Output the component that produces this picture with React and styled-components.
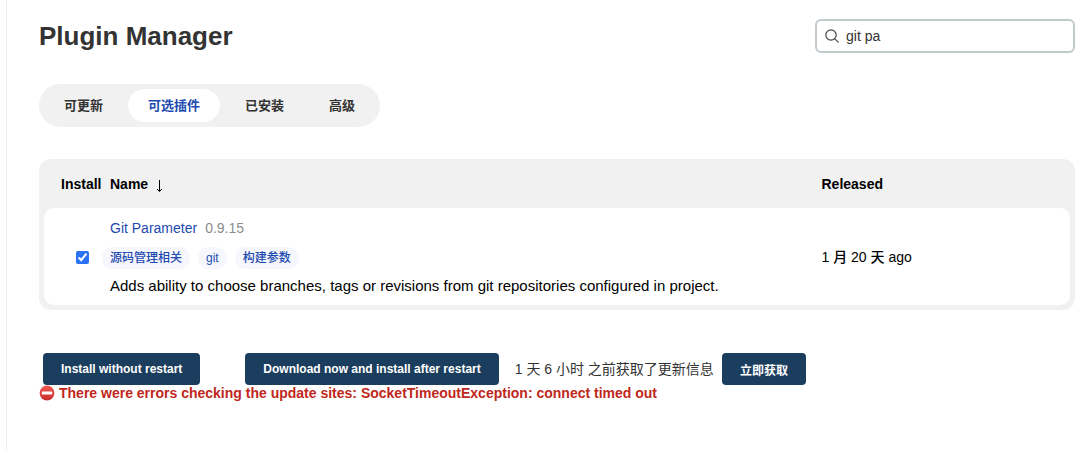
import React, { useState } from "react";
import styled, { createGlobalStyle } from "styled-components";

const GlobalStyle = createGlobalStyle`
  *, *::before, *::after { box-sizing: border-box; }
  body {
    margin: 0;
    background: #fff;
    color: #333;
    font-family: "Liberation Sans", "Noto Sans CJK SC", sans-serif;
    font-size: 14px;
    line-height: 20px;
  }
  button, input { font-family: inherit; }
`;

const Main = styled.main`
  min-height: 100vh;
  margin-left: 6px;
  padding: 19px 10px 48px 32px;
  border-left: 1px solid #f0f0f0;
`;

const Header = styled.header`
  display: flex;
  align-items: center;
  justify-content: space-between;
  gap: 20px;
`;

const Title = styled.h1`
  margin: 0;
  font-size: 26px;
  line-height: 34px;
  font-weight: 700;
`;

const SearchBox = styled.label`
  display: flex;
  align-items: center;
  gap: 7px;
  width: 260px;
  height: 34px;
  padding: 0 8px;
  border: 2px solid #c3cace;
  border-radius: 6px;
  background: #fff;
`;

const SearchInput = styled.input`
  flex: 1;
  min-width: 0;
  padding: 0;
  border: 0;
  outline: 0;
  background: transparent;
  color: #333;
  font-size: 14px;
  line-height: 20px;
`;

const Tabs = styled.nav`
  display: flex;
  width: fit-content;
  gap: 5px;
  margin-top: 31px;
  padding: 5px;
  border-radius: 22px;
  background: #f1f1f1;
`;

const Tab = styled.a`
  padding: 0 20px;
  border-radius: 17px;
  background: ${(p) => (p.$active ? "#fff" : "transparent")};
  color: ${(p) => (p.$active ? "#1d4ab0" : "#333")};
  font-size: 13px;
  line-height: 33px;
  font-weight: 700;
  text-decoration: none;
`;

const TableFrame = styled.div`
  margin-top: 32px;
  padding: 0 5px 5px;
  border-radius: 12px;
  background: #f1f1f1;
`;

const PluginTable = styled.table`
  width: 100%;
  border-collapse: separate;
  border-spacing: 0;
  table-layout: fixed;
  color: #000;
`;

const HeadCell = styled.th`
  width: ${(p) => p.$width || "auto"};
  height: 49px;
  padding: 0 0 0 ${(p) => (p.$first ? 17 : 8)}px;
  font-size: 14px;
  text-align: left;
  white-space: nowrap;
`;

const SortArrow = styled.svg`
  margin-left: 8px;
  vertical-align: -4px;
`;

const Cell = styled.td`
  padding: 10px 8px 9px;
  background: #fff;
  font-weight: 500;
  vertical-align: middle;
  &:first-child {
    padding-right: 0;
    padding-left: 32px;
    border-radius: 10px 0 0 10px;
  }
  &:last-child { border-radius: 0 10px 10px 0; }
`;

const Checkbox = styled.input`
  display: block;
  width: 13px;
  height: 13px;
  margin: 0;
  accent-color: #2a72f5;
`;

const PluginLink = styled.a`
  color: #1d4ab0;
  text-decoration: none;
`;

const Version = styled.span`
  margin-left: 8px;
  color: #8c8c8c;
`;

const TagList = styled.div`
  display: flex;
  gap: 8px;
  margin: 9px 0 7px -8px;
`;

const Tag = styled.a`
  padding: 0 8px;
  border-radius: 11px;
  background: #f6f7fc;
  color: #1d4ab0;
  font-size: 12px;
  line-height: 22px;
  text-decoration: none;
`;

const Description = styled.div`
  font-size: 15px;
`;

const Actions = styled.div`
  display: flex;
  align-items: center;
  margin-top: 43px;
  padding-left: 4px;
`;

const Button = styled.button`
  height: 32px;
  padding: 0 18px;
  border: 0;
  border-radius: 4px;
  background: #1b3e5e;
  color: #fff;
  font-size: 12px;
  font-weight: 700;
  white-space: nowrap;
  & + & { margin-left: 45px; }
`;

const UpdateInfo = styled.span`
  margin: 0 8px 0 16px;
`;

const ErrorMessage = styled.div`
  display: flex;
  align-items: center;
  gap: 4px;
  line-height: 16px;
  font-weight: 700;
  color: #c02720;
`;

const SearchIcon = () => (
  <svg width="14" height="14" viewBox="0 0 14 14" fill="none" stroke="#444" strokeWidth="1.2" strokeLinecap="round" aria-hidden="true">
    <circle cx="6" cy="6" r="5.2" />
    <path d="M9.8 9.8 13.2 13.2" />
  </svg>
);

const NoEntryIcon = () => (
  <svg width="16" height="16" viewBox="0 0 16 16" aria-hidden="true">
    <defs>
      <linearGradient id="sign" x1="0" y1="0" x2="0" y2="1">
        <stop offset="0" stopColor="#f0584f" />
        <stop offset="1" stopColor="#c9302c" />
      </linearGradient>
    </defs>
    <circle cx="8" cy="8" r="7.4" fill="url(#sign)" />
    <rect x="2.8" y="6.4" width="10.4" height="3.2" rx="0.6" fill="#fff" />
  </svg>
);

const tabs = ["可更新", "可选插件", "已安装", "高级"];
const tags = ["源码管理相关", "git", "构建参数"];

export default function App() {
  const [query, setQuery] = useState("git pa");
  const [checked, setChecked] = useState(true);
  const [active, setActive] = useState(1);

  return (
    <>
      <GlobalStyle />
      <Main>
        <Header>
          <Title>Plugin Manager</Title>
          <SearchBox>
            <SearchIcon />
            <SearchInput aria-label="Search" value={query} onChange={(e) => setQuery(e.target.value)} />
          </SearchBox>
        </Header>
        <Tabs>
          {tabs.map((name, i) => (
            <Tab key={name} href="#" $active={i === active} onClick={() => setActive(i)}>{name}</Tab>
          ))}
        </Tabs>
        <TableFrame>
          <PluginTable>
            <thead>
              <tr>
                <HeadCell $first $width="58px">Install</HeadCell>
                <HeadCell>
                  Name
                  <SortArrow width="7" height="14" viewBox="0 0 7 14" fill="none" stroke="#000" aria-hidden="true">
                    <path d="M3.5 1v11" />
                    <path d="M1.2 10 3.5 12.6 5.8 10" />
                  </SortArrow>
                </HeadCell>
                <HeadCell $width="25%">Released</HeadCell>
              </tr>
            </thead>
            <tbody>
              <tr>
                <Cell>
                  <Checkbox type="checkbox" aria-label="Git Parameter" checked={checked} onChange={(e) => setChecked(e.target.checked)} />
                </Cell>
                <Cell>
                  <div>
                    <PluginLink href="#">Git Parameter</PluginLink>
                    <Version>0.9.15</Version>
                  </div>
                  <TagList>
                    {tags.map((tag) => <Tag key={tag} href="#">{tag}</Tag>)}
                  </TagList>
                  <Description>Adds ability to choose branches, tags or revisions from git repositories configured in project.</Description>
                </Cell>
                <Cell>1 月 20 天 ago</Cell>
              </tr>
            </tbody>
          </PluginTable>
        </TableFrame>
        <Actions>
          <Button type="button">Install without restart</Button>
          <Button type="button">Download now and install after restart</Button>
          <UpdateInfo>1 天 6 小时 之前获取了更新信息</UpdateInfo>
          <Button type="button">立即获取</Button>
        </Actions>
        <ErrorMessage role="alert">
          <NoEntryIcon />
          There were errors checking the update sites: SocketTimeoutException: connect timed out
        </ErrorMessage>
      </Main>
    </>
  );
}
